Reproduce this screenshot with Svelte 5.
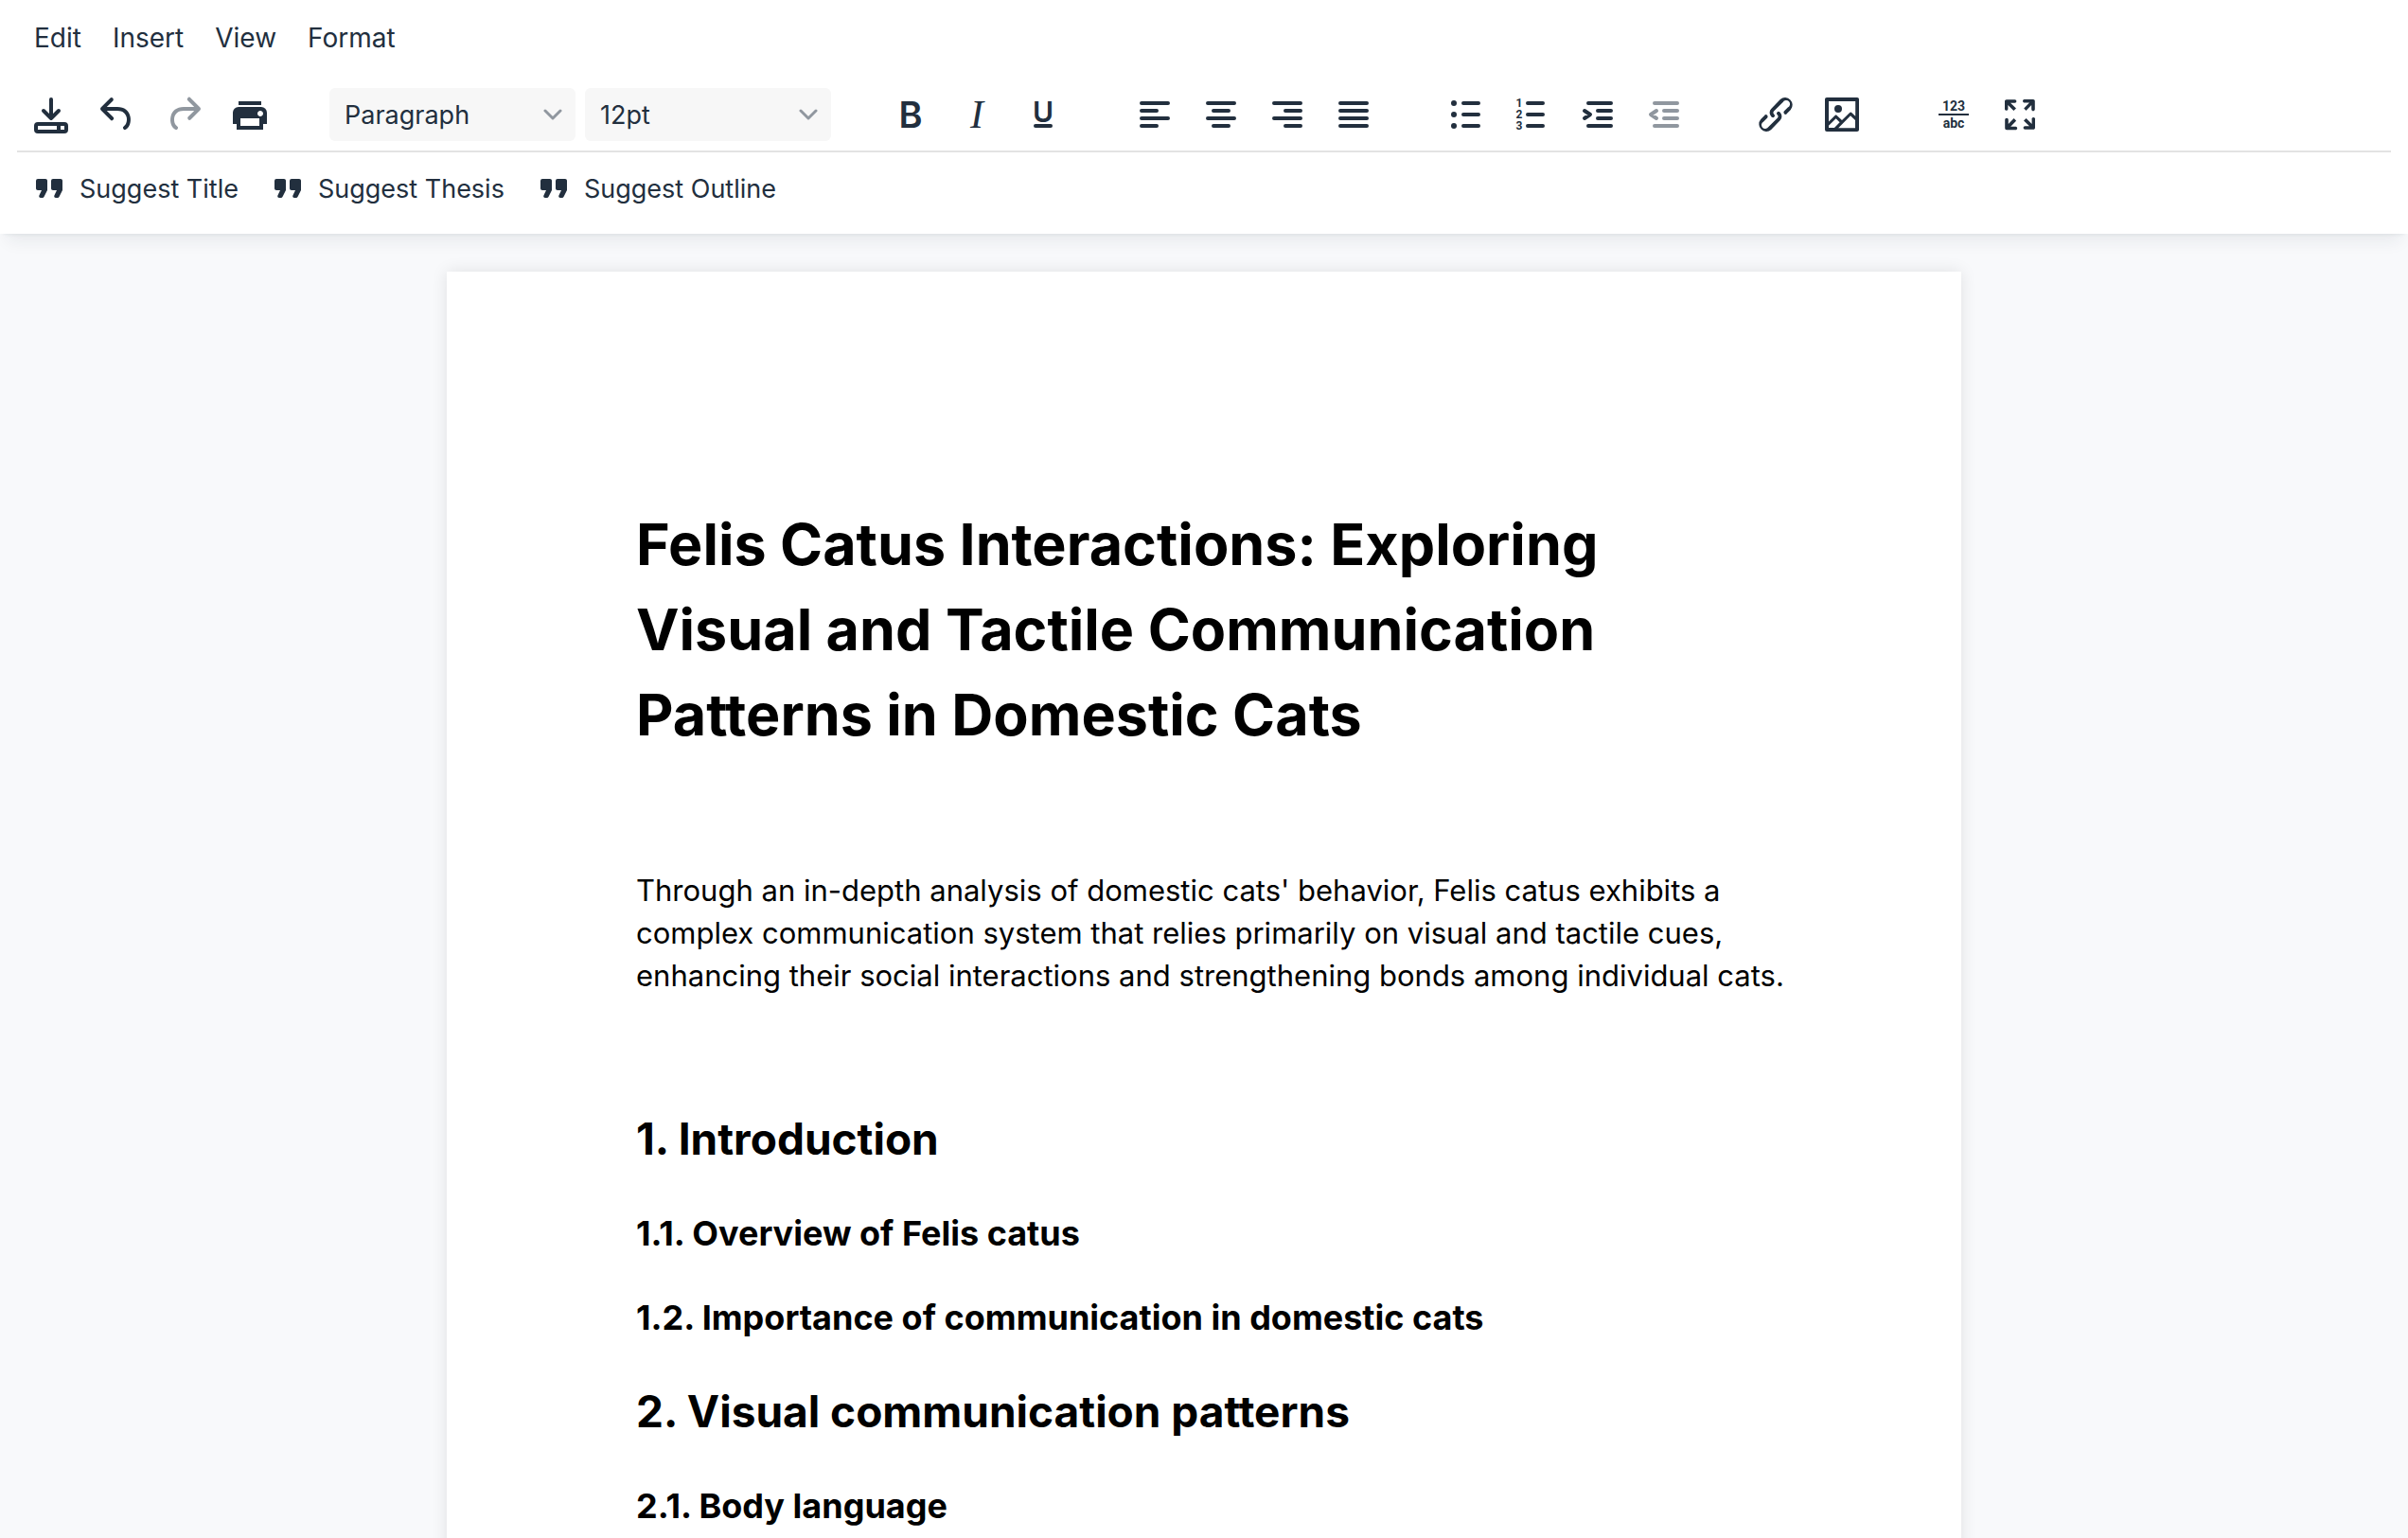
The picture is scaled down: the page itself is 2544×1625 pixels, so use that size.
<script lang="ts">
  type Tool = {
    name: string;
    label: string;
    disabled?: boolean;
  };

  const menus = ['Edit', 'Insert', 'View', 'Format'];

  const historyTools: Tool[] = [
    { name: 'export', label: 'Export' },
    { name: 'undo', label: 'Undo' },
    { name: 'redo', label: 'Redo', disabled: true },
    { name: 'print', label: 'Print' },
  ];

  const toolGroups: Tool[][] = [
    [
      { name: 'bold', label: 'Bold' },
      { name: 'italic', label: 'Italic' },
      { name: 'underline', label: 'Underline' },
    ],
    [
      { name: 'align-left', label: 'Align left' },
      { name: 'align-center', label: 'Align center' },
      { name: 'align-right', label: 'Align right' },
      { name: 'align-justify', label: 'Justify' },
    ],
    [
      { name: 'bullist', label: 'Bullet list' },
      { name: 'numlist', label: 'Numbered list' },
      { name: 'indent', label: 'Increase indent' },
      { name: 'outdent', label: 'Decrease indent', disabled: true },
    ],
    [
      { name: 'link', label: 'Insert link' },
      { name: 'image', label: 'Insert image' },
    ],
    [
      { name: 'wordcount', label: 'Word count' },
      { name: 'fullscreen', label: 'Fullscreen' },
    ],
  ];

  const suggestions = ['Suggest Title', 'Suggest Thesis', 'Suggest Outline'];

  // icons made of one filled shape
  const shapes: Record<string, string> = {
    undo: 'M6.4 8H12c3.7 0 6.2 2 6.8 5.1.6 2.7-.4 5.6-2.3 6.8a1 1 0 0 1-1-1.8c1.1-.6 1.8-2.7 1.4-4.6-.5-2.1-2.1-3.5-4.9-3.5H6.4l3.3 3.3a1 1 0 1 1-1.4 1.4l-5-5a1 1 0 0 1 0-1.4l5-5a1 1 0 0 1 1.4 1.4L6.4 8Z',
    redo: 'M17.6 10H12c-2.8 0-4.4 1.4-4.9 3.5-.4 2 .3 4 1.4 4.6a1 1 0 1 1-1 1.8c-2-1.2-2.9-4.1-2.3-6.8.6-3 3-5.1 6.8-5.1h5.6l-3.3-3.3a1 1 0 1 1 1.4-1.4l5 5a1 1 0 0 1 0 1.4l-5 5a1 1 0 0 1-1.4-1.4l3.3-3.3Z',
    print: 'M18 8H6a3 3 0 0 0-3 3v6h2v3h14v-3h2v-6a3 3 0 0 0-3-3Zm-1 10H7v-4h10v4Zm.5-5c-.8 0-1.5-.7-1.5-1.5s.7-1.5 1.5-1.5 1.5.7 1.5 1.5-.7 1.5-1.5 1.5Zm.5-8H6v2h12V5Z',
    link: 'M6.2 12.3a1 1 0 0 1 1.4 1.4l-2 2a2 2 0 1 0 2.6 2.8l4.8-4.8a1 1 0 0 0 0-1.4 1 1 0 1 1 1.4-1.3 2.9 2.9 0 0 1 0 4L9.6 20a3.9 3.9 0 0 1-5.5-5.5l2-2Zm11.6-.6a1 1 0 0 1-1.4-1.4l2-2a2 2 0 1 0-2.6-2.8L11 10.3a1 1 0 0 0 0 1.4A1 1 0 1 1 9.6 13a2.9 2.9 0 0 1 0-4L14.4 4a3.9 3.9 0 0 1 5.5 5.5l-2 2Z',
    image: 'm5 15.7 3.3-3.2c.3-.3.7-.3 1 0L12 15l4.1-4c.3-.4.8-.4 1 0l2 1.9V5H5v10.7ZM5 18V19h3l2.8-2.9-2-2L5 17.9Zm14-3-2.5-2.4-6.4 6.5H19v-4ZM4 3h16c.6 0 1 .4 1 1v16c0 .6-.4 1-1 1H4a1 1 0 0 1-1-1V4c0-.6.4-1 1-1Zm6 8a2 2 0 1 0 0-4 2 2 0 0 0 0 4Z',
    fullscreen: 'm15.3 10-1.2-1.3 2.9-3h-2.3a.9.9 0 1 1 0-1.7H19c.5 0 .9.4.9.9v4.4a.9.9 0 1 1-1.8 0V7l-2.9 3Zm0 4 3 3v-2.3a.9.9 0 1 1 1.7 0V19c0 .5-.4.9-.9.9h-4.4a.9.9 0 1 1 0-1.8H17l-3-2.9 1.3-1.2ZM10 15.4l-2.9 3h2.3a.9.9 0 1 1 0 1.7H5a.9.9 0 0 1-.9-.9v-4.4a.9.9 0 1 1 1.8 0V17l2.9-3 1.2 1.3ZM8.7 10 5.7 7v2.3a.9.9 0 0 1-1.7 0V5c0-.5.4-.9.9-.9h4.4a.9.9 0 0 1 0 1.8H7l3 2.9-1.3 1.2Z',
    quote: 'M7.5 17h.9c.4 0 .7-.2.9-.6L11 13V8c0-.6-.4-1-1-1H6a1 1 0 0 0-1 1v4c0 .6.4 1 1 1h2l-1.3 2.7a1 1 0 0 0 .8 1.3Zm8 0h.9c.4 0 .7-.2.9-.6L19 13V8c0-.6-.4-1-1-1h-4a1 1 0 0 0-1 1v4c0 .6.4 1 1 1h2l-1.3 2.7a1 1 0 0 0 .8 1.3Z',
  };

  // icons made of round-capped strokes
  const strokes: Record<string, string> = {
    'align-left': 'M5 6h14M5 10h8M5 14h14M5 18h8',
    'align-center': 'M5 6h14M8 10h8M5 14h14M8 18h8',
    'align-right': 'M5 6h14M11 10h8M5 14h14M11 18h8',
    'align-justify': 'M5 6h14M5 10h14M5 14h14M5 18h14',
    bullist: 'M11 6h8M11 12h8M11 18h8',
    numlist: 'M10 6h8M10 12h8M10 18h8',
    indent: 'M7 6h12M12 10h7M12 14h7M7 18h12M5 10l3 2-3 2',
    outdent: 'M7 6h12M12 10h7M12 14h7M7 18h12M8 10l-3 2 3 2',
    export: 'M12 4v10M8 10l4 4 4-4',
  };

  let block = $state('Paragraph');
  let size = $state('12pt');
</script>

{#snippet icon(name: string)}
  <svg class="icon" viewBox="0 0 24 24" aria-hidden="true">
    {#if shapes[name]}
      <path fill-rule="evenodd" d={shapes[name]} />
    {/if}
    {#if strokes[name]}
      <path class="stroke" d={strokes[name]} />
    {/if}
    {#if name === 'export'}
      <path fill-rule="evenodd" d="M5 16h14a2 2 0 0 1 2 2v2a2 2 0 0 1-2 2H5a2 2 0 0 1-2-2v-2a2 2 0 0 1 2-2Zm0 2v2h10v-2H5Zm12 0v2h2v-2h-2Z" />
    {:else if name === 'bullist'}
      <circle cx="6" cy="6" r="1.5" />
      <circle cx="6" cy="12" r="1.5" />
      <circle cx="6" cy="18" r="1.5" />
    {:else if name === 'numlist'}
      <text class="digit" x="5.5" y="8">1</text>
      <text class="digit" x="5.5" y="14">2</text>
      <text class="digit" x="5.5" y="20">3</text>
    {:else if name === 'bold'}
      <text class="bold" x="12" y="19">B</text>
    {:else if name === 'italic'}
      <text class="italic" x="12" y="19">I</text>
    {:else if name === 'underline'}
      <text class="underline" x="12" y="16">U</text>
      <rect x="7" y="17" width="10" height="2" rx="1" />
    {:else if name === 'wordcount'}
      <text class="count" x="12" y="10">123</text>
      <rect x="4" y="11.5" width="16" height="1" />
      <text class="count" x="12" y="19">abc</text>
    {/if}
  </svg>
{/snippet}

{#snippet group(tools: Tool[])}
  <div class="group">
    {#each tools as tool}
      <button type="button" class="tool" aria-label={tool.label} disabled={tool.disabled}>
        {@render icon(tool.name)}
      </button>
    {/each}
  </div>
{/snippet}

{#snippet chevron()}
  <svg class="chevron" viewBox="0 0 20 20" aria-hidden="true">
    <path d="M2 6l8 8 8-8" />
  </svg>
{/snippet}

<div class="editor">
  <header>
    <nav class="menubar" aria-label="Menu">
      {#each menus as menu}
        <button type="button">{menu}</button>
      {/each}
    </nav>

    <div class="toolbar" role="toolbar" aria-label="Formatting">
      {@render group(historyTools)}
      <div class="group selects">
        <label class="select">
          <select aria-label="Block format" bind:value={block}>
            <option>Paragraph</option>
            <option>Heading 1</option>
            <option>Heading 2</option>
            <option>Heading 3</option>
          </select>
          {@render chevron()}
        </label>
        <label class="select">
          <select aria-label="Font size" bind:value={size}>
            <option>10pt</option>
            <option>12pt</option>
            <option>14pt</option>
            <option>18pt</option>
          </select>
          {@render chevron()}
        </label>
      </div>
      {#each toolGroups as tools}
        {@render group(tools)}
      {/each}
    </div>

    <div class="suggestions">
      {#each suggestions as suggestion}
        <button type="button">{@render icon('quote')}<span>{suggestion}</span></button>
      {/each}
    </div>
  </header>

  <main>
    <article>
      <h1>Felis Catus Interactions: Exploring Visual and Tactile Communication Patterns in Domestic Cats</h1>
      <p>&nbsp;</p>
      <p>
        Through an in-depth analysis of domestic cats' behavior, Felis catus exhibits a complex
        communication system that relies primarily on visual and tactile cues, enhancing their
        social interactions and strengthening bonds among individual cats.
      </p>
      <p>&nbsp;</p>
      <h2>1. Introduction</h2>
      <h3>1.1. Overview of Felis catus</h3>
      <h3>1.2. Importance of communication in domestic cats</h3>
      <h2>2. Visual communication patterns</h2>
      <h3>2.1. Body language</h3>
    </article>
  </main>
</div>

<style>
  :global(body) { margin: 0; }
  .editor {
    display: flex;
    flex-direction: column;
    height: 100vh;
    background: #f8f9fb;
    color: #222f3e;
    font-family: Inter, "Liberation Sans", sans-serif;
    font-size: 27px;
  }
  header {
    z-index: 1;
    flex: none;
    background: #fff;
    box-shadow: 0 4px 4px -4px rgb(34 47 62 / 10%), 0 16px 16px -8px rgb(34 47 62 / 7%);
  }
  button {
    height: 56px;
    padding: 0;
    border: 0;
    border-radius: 6px;
    background: transparent;
    color: inherit;
    font: inherit;
  }
  button:hover:enabled { background: #cce2fa; }
  button:disabled { color: #90979f; }
  .menubar {
    display: flex;
    gap: 1px;
    padding: 12px 20px;
    font-size: 28px;
  }
  .menubar button { padding: 0 16px; }
  .toolbar {
    display: flex;
    flex-wrap: wrap;
    gap: 0 50px;
    margin: 0 18px;
    padding: 13px 2px 10px;
    border-bottom: 2px solid #e3e3e3;
  }
  .group {
    display: flex;
    gap: 2px;
  }
  .selects { gap: 10px; }
  .tool {
    display: grid;
    place-items: center;
    width: 68px;
  }
  .icon {
    display: block;
    width: 48px;
    height: 48px;
    fill: currentColor;
  }
  .stroke {
    fill: none;
    stroke: currentColor;
    stroke-width: 2;
    stroke-linecap: round;
    stroke-linejoin: round;
  }
  .icon text { text-anchor: middle; }
  .bold { font-size: 19px; font-weight: 600; }
  .italic { font-family: "Liberation Serif", serif; font-size: 21px; font-style: italic; }
  .underline { font-size: 15px; font-weight: 600; }
  .digit { font-family: Roboto, sans-serif; font-size: 6px; font-weight: 700; }
  .count { font-family: Roboto, sans-serif; font-size: 7px; font-weight: 700; }
  .select {
    display: grid;
    align-items: center;
    width: 260px;
  }
  .select > :global(*) { grid-area: 1 / 1; }
  select {
    width: 100%;
    height: 56px;
    padding: 0 48px 0 16px;
    border: 0;
    border-radius: 6px;
    background: #f7f7f7;
    color: inherit;
    font: inherit;
    appearance: none;
  }
  .chevron {
    justify-self: end;
    width: 20px;
    height: 20px;
    margin-right: 14px;
    fill: none;
    stroke: #90979f;
    stroke-width: 3;
    stroke-linecap: round;
    stroke-linejoin: round;
    pointer-events: none;
  }
  .suggestions {
    display: flex;
    gap: 4px;
    padding: 10px 20px 20px;
  }
  .suggestions button {
    display: flex;
    align-items: center;
    gap: 8px;
    padding: 0 16px 0 8px;
  }
  main {
    flex: 1;
    min-height: 0;
    padding: 40px 24px 0;
    overflow-y: auto;
    scrollbar-width: none;
  }
  article {
    box-sizing: border-box;
    max-width: 1600px;
    margin: 0 auto;
    padding: 200px;
    background: #fff;
    box-shadow: 0 0 16px rgb(0 0 0 / 10%);
    color: #000;
    font-size: 31px;
    line-height: 45px;
  }
  h1 { margin: 43px 0 41px; font-size: 61px; line-height: 90px; }
  h2 { margin: 40px 0; font-size: 46px; line-height: 67px; }
  h3 { margin: 37px 0; font-size: 36px; line-height: 52px; }
  /* body text may run a little into the right page margin */
  p { margin: 32px -20px 32px 0; }
</style>
